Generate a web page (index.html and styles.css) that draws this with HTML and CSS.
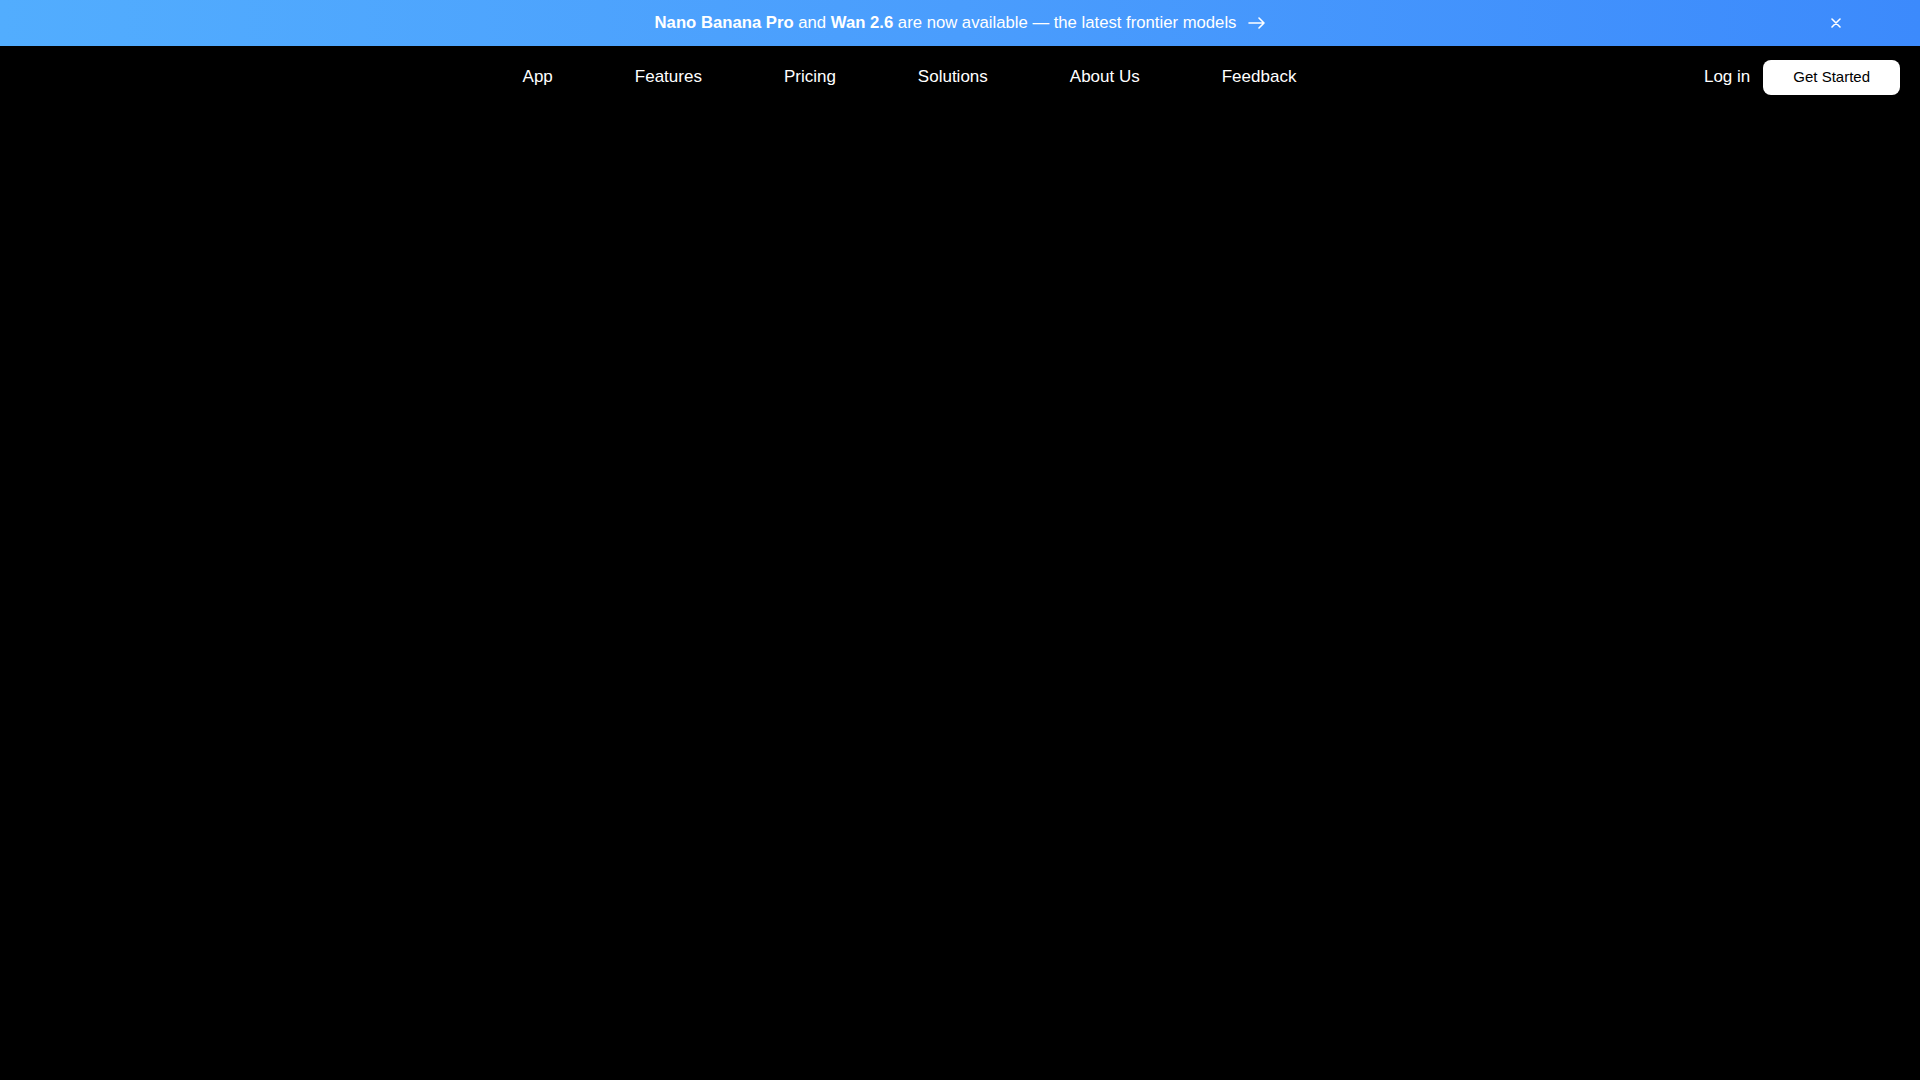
FILE: index.html
```html
<!DOCTYPE html>
<html lang="en">
<head>
<meta charset="utf-8">
<title>Home</title>
<link rel="stylesheet" href="styles.css">
</head>
<body>
<div class="banner">
  <a class="banner-link" href="#">
    <span class="banner-text"><b>Nano Banana Pro</b> and <b>Wan 2.6</b> are now available — the latest frontier models</span>
    <svg class="arrow" width="17" height="12" viewBox="0 0 17 12" fill="none" stroke="#fff" stroke-width="1.6" stroke-linecap="round" stroke-linejoin="round"><path d="M1 6h15M11 1l5 5-5 5"/></svg>
  </a>
  <button class="close" aria-label="Close">
    <svg width="10" height="10" viewBox="0 0 10 10" stroke="#fff" stroke-width="1.6" stroke-linecap="round"><path d="M1 1l8 8M9 1l-8 8"/></svg>
  </button>
</div>
<header class="header">
  <nav class="nav">
    <a href="#">App</a>
    <a href="#">Features</a>
    <a href="#">Pricing</a>
    <a href="#">Solutions</a>
    <a href="#">About Us</a>
    <a href="#">Feedback</a>
  </nav>
  <div class="actions">
    <a class="login" href="#">Log in</a>
    <a class="cta" href="#">Get Started</a>
  </div>
</header>
<main class="main"></main>
</body>
</html>
```
FILE: styles.css
```css
* { box-sizing: border-box; }
html, body { margin: 0; padding: 0; }
body {
  background: #000;
  font-family: Arial, "Liberation Sans", Helvetica, sans-serif;
  color: #fff;
  min-height: 100vh;
}
a { color: inherit; text-decoration: none; }
.banner {
  position: relative;
  height: 46px;
  background: linear-gradient(90deg, #52adfe 0%, #4a9dfd 50%, #3c8afc 100%);
  display: flex;
  align-items: center;
  justify-content: center;
}
.banner-link {
  font-size: 16.7px;
  color: #fff;
  display: flex;
  align-items: center;
  gap: 12px;
}
.banner-text { white-space: nowrap; }
.banner-text b { font-weight: 700; }
.arrow { display: block; }
.close {
  position: absolute;
  right: 79px;
  top: 18px;
  width: 10px;
  height: 10px;
  padding: 0;
  border: 0;
  background: none;
  cursor: pointer;
}
.close svg { display: block; }
.header {
  height: 62px;
  display: flex;
  align-items: center;
  padding: 0 20px;
}
.nav {
  flex: 1;
  display: flex;
  justify-content: center;
  gap: 82px;
  padding-left: 95px;
  font-size: 17px;
}
.actions {
  display: flex;
  align-items: center;
  gap: 13px;
}
.login { font-size: 17px; }
.cta {
  background: #fff;
  color: #000;
  font-size: 15px;
  height: 35px;
  padding: 0 30px 1px;
  border-radius: 8px;
  display: flex;
  align-items: center;
}
```
